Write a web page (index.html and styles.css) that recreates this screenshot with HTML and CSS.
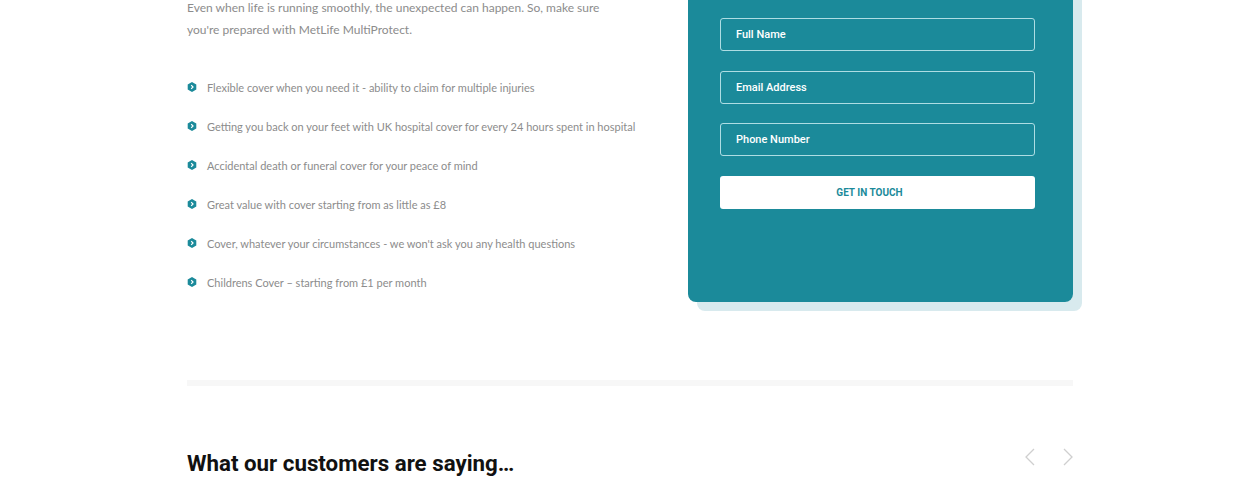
FILE: index.html
```html
<!DOCTYPE html>
<html>
<head>
<meta charset="utf-8">
<link rel="stylesheet" href="styles.css">
</head>
<body>
<div class="page">
  <section class="intro">
    <div class="left">
      <p class="lead">Even when life is running smoothly, the unexpected can happen. So, make sure you're prepared with MetLife MultiProtect.</p>
      <ul class="features">
        <li><svg class="bullet" viewBox="0 0 10 10"><polygon points="5,0 9.3,2.5 9.3,7.5 5,10 0.7,7.5 0.7,2.5" fill="#1b8a9a"/><path d="M4.2 3.2 L6 5 L4.2 6.8" fill="none" stroke="#fff" stroke-width="1.2"/></svg>Flexible cover when you need it - ability to claim for multiple injuries</li>
        <li><svg class="bullet" viewBox="0 0 10 10"><polygon points="5,0 9.3,2.5 9.3,7.5 5,10 0.7,7.5 0.7,2.5" fill="#1b8a9a"/><path d="M4.2 3.2 L6 5 L4.2 6.8" fill="none" stroke="#fff" stroke-width="1.2"/></svg>Getting you back on your feet with UK hospital cover for every 24 hours spent in hospital</li>
        <li><svg class="bullet" viewBox="0 0 10 10"><polygon points="5,0 9.3,2.5 9.3,7.5 5,10 0.7,7.5 0.7,2.5" fill="#1b8a9a"/><path d="M4.2 3.2 L6 5 L4.2 6.8" fill="none" stroke="#fff" stroke-width="1.2"/></svg>Accidental death or funeral cover for your peace of mind</li>
        <li><svg class="bullet" viewBox="0 0 10 10"><polygon points="5,0 9.3,2.5 9.3,7.5 5,10 0.7,7.5 0.7,2.5" fill="#1b8a9a"/><path d="M4.2 3.2 L6 5 L4.2 6.8" fill="none" stroke="#fff" stroke-width="1.2"/></svg>Great value with cover starting from as little as £8</li>
        <li><svg class="bullet" viewBox="0 0 10 10"><polygon points="5,0 9.3,2.5 9.3,7.5 5,10 0.7,7.5 0.7,2.5" fill="#1b8a9a"/><path d="M4.2 3.2 L6 5 L4.2 6.8" fill="none" stroke="#fff" stroke-width="1.2"/></svg>Cover, whatever your circumstances - we won't ask you any health questions</li>
        <li><svg class="bullet" viewBox="0 0 10 10"><polygon points="5,0 9.3,2.5 9.3,7.5 5,10 0.7,7.5 0.7,2.5" fill="#1b8a9a"/><path d="M4.2 3.2 L6 5 L4.2 6.8" fill="none" stroke="#fff" stroke-width="1.2"/></svg>Childrens Cover – starting from £1 per month</li>
      </ul>
    </div>
    <div class="card-wrap">
      <form class="card">
        <div class="field">Full Name</div>
        <div class="field">Email Address</div>
        <div class="field">Phone Number</div>
        <div class="btn">GET IN TOUCH</div>
      </form>
    </div>
  </section>
  <hr class="divider">
  <section class="reviews">
    <h2>What our customers are saying…</h2>
    <div class="arrows">
      <svg class="arrow" viewBox="0 0 12 18"><path d="M10 1 L2 9 L10 17" fill="none" stroke="#cfcfcf" stroke-width="1.3"/></svg>
      <svg class="arrow" viewBox="0 0 12 18"><path d="M2 1 L10 9 L2 17" fill="none" stroke="#cfcfcf" stroke-width="1.3"/></svg>
    </div>
  </section>
</div>
</body>
</html>
```
FILE: styles.css
```css
html, body {
  margin: 0;
  padding: 0;
  background: #fff;
  overflow: hidden;
}
.page {
  width: 886px;
  margin-left: 187px;
}
.intro {
  display: flex;
  justify-content: space-between;
  align-items: flex-start;
}
.left {
  width: 470px;
  font-family: "Lato", "Open Sans", sans-serif;
  color: #8c8c8c;
}
.lead {
  margin: -3px 0 0;
  font-size: 12px;
  line-height: 22px;
  width: 420px;
}
.features {
  list-style: none;
  margin: 38px 0 0;
  padding: 0;
}
.features li {
  display: flex;
  align-items: center;
  font-size: 11px;
  height: 16px;
  margin-bottom: 23px;
  white-space: nowrap;
}
.bullet {
  width: 10px;
  height: 10px;
  margin-right: 10px;
  flex: none;
}
.card-wrap {
  width: 385px;
  margin-top: -40px;
  border-radius: 8px;
  box-shadow: 9px 9px 0 #d8eaee;
}
.card {
  background: #1b8a9a;
  border-radius: 8px;
  padding: 58px 38px 93px 32px;
  display: flex;
  flex-direction: column;
  gap: 19.5px;
  margin: 0;
}
.field {
  box-sizing: border-box;
  height: 33px;
  border: 1px solid rgba(200, 235, 240, 0.85);
  border-radius: 3px;
  font-family: "Roboto", "Inter", sans-serif;
  font-weight: 500;
  font-size: 11px;
  color: #fff;
  display: flex;
  align-items: center;
  padding-left: 15px;
}
.btn {
  height: 33px;
  background: #fff;
  border-radius: 3px;
  color: #1b8a9a;
  font-family: "Roboto", "Inter", sans-serif;
  font-weight: 700;
  font-size: 10px;
  display: flex;
  align-items: center;
  justify-content: center;
  padding-right: 16px;
}
.divider {
  border: none;
  height: 6px;
  background: #f7f7f7;
  margin: 67px 0 0;
}
.reviews {
  display: flex;
  justify-content: space-between;
  align-items: center;
  margin-top: 64px;
}
.reviews h2 {
  margin: 0;
  font-family: "Roboto", sans-serif;
  font-weight: 700;
  font-size: 22.3px;
  color: #111;
}
.arrows {
  display: flex;
  gap: 26px;
  margin-top: -12px;
  margin-right: -1px;
}
.arrow {
  width: 12px;
  height: 18px;
}
```
